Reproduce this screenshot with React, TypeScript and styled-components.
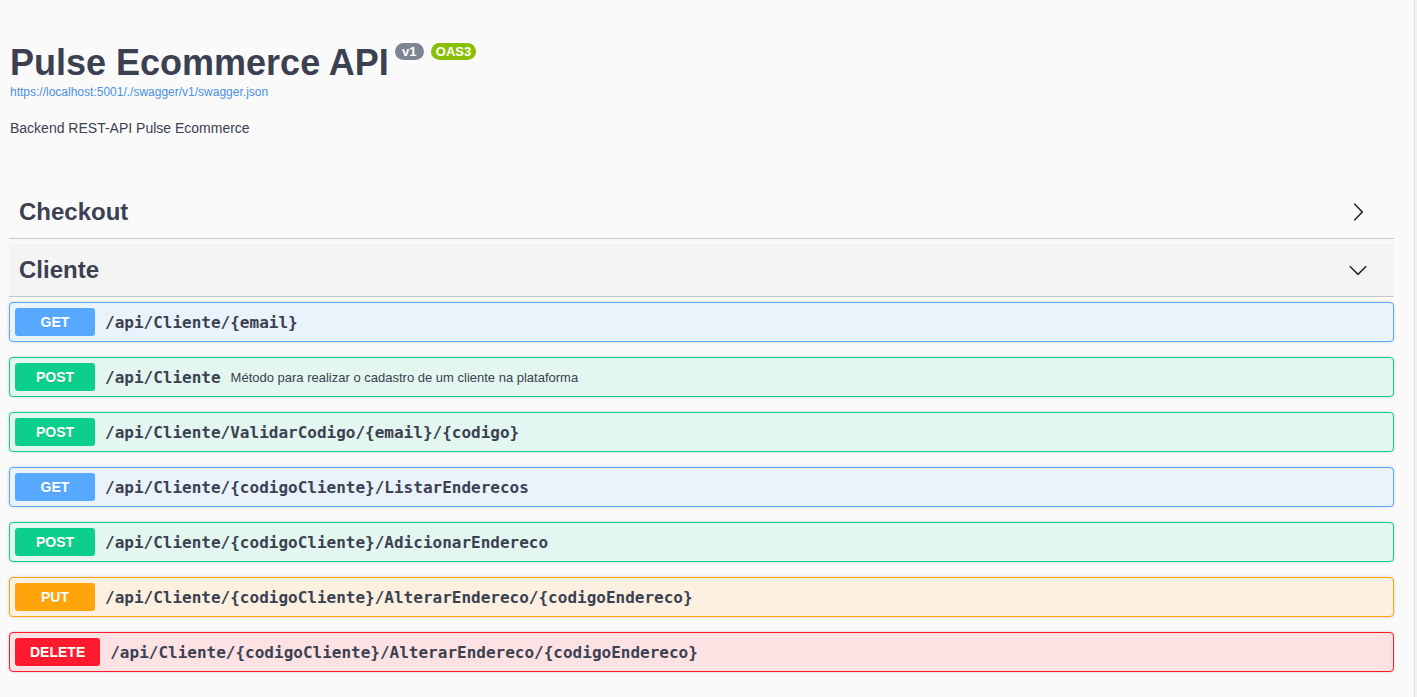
import React from 'react';
import styled, { createGlobalStyle } from 'styled-components';

const GlobalStyle = createGlobalStyle`
    html {
        background: linear-gradient(to left, #f2f2f2 0 2px, #e2e2e2 2px 3px, #fafafa 3px);
    }
    body {
        margin: 0;
        background: transparent;
        font-family: 'Liberation Sans', Arial, sans-serif;
        color: #3b4151;
    }
`;

const methodColors = {
    GET: { main: '#56a9ff', bg: '#eaf2fc' },
    POST: { main: '#0ccf8b', bg: '#e3f6ef' },
    PUT: { main: '#ffa40a', bg: '#fcf0e0' },
    DELETE: { main: '#fe1b2d', bg: '#fde2e4' },
};

type Method = keyof typeof methodColors;

const Wrapper = styled.div`
    padding: 0 23px 40px 9px;
`;

const Info = styled.div`
    padding: 42px 0 0 1px;
`;

const TitleRow = styled.div`
    display: flex;
    align-items: flex-start;
    gap: 6px;
`;

const Title = styled.h2`
    margin: 0;
    font-size: 36px;
    line-height: 41px;
    font-weight: 700;
    color: #3b4151;
`;

const Badges = styled.div`
    display: flex;
    gap: 7px;
    margin-top: 1px;
`;

const Badge = styled.span<{ $color: string }>`
    display: inline-block;
    box-sizing: border-box;
    min-width: 29px;
    height: 17px;
    padding: 0 5px;
    border-radius: 57px;
    background: ${(p) => p.$color};
    color: #fff;
    font-size: 13px;
    font-weight: 700;
    line-height: 17px;
    text-align: center;
`;

const Link = styled.a`
    display: block;
    margin-top: 2px;
    font-size: 12px;
    line-height: 14px;
    color: #4990e2;
    text-decoration: none;
`;

const Description = styled.p`
    margin: 19px 0 0;
    font-size: 14px;
    line-height: 20px;
    color: #3b4151;
`;

const Sections = styled.div`
    margin-top: 48px;
`;

const TagHeader = styled.div<{ $open?: boolean }>`
    display: flex;
    align-items: center;
    height: 32px;
    padding: 10px 26px 10px 10px;
    margin-bottom: 5px;
    border-bottom: 1px solid #c4c5ca;
    background: ${(p) => (p.$open ? '#f4f4f4' : 'transparent')};
    cursor: pointer;
`;

const TagName = styled.h3`
    flex: 1;
    margin: 0;
    font-size: 24px;
    font-weight: 700;
    color: #3b4151;
`;

const Arrow = styled.svg`
    width: 20px;
    height: 20px;
    fill: #222;
`;

const OpBlock = styled.div<{ $method: Method }>`
    display: flex;
    align-items: center;
    padding: 5px;
    margin-bottom: 15px;
    border: 1px solid ${(p) => methodColors[p.$method].main};
    border-radius: 4px;
    background: ${(p) => methodColors[p.$method].bg};
    box-shadow: 0 0 3px rgba(0, 0, 0, 0.19);
    cursor: pointer;
`;

const MethodLabel = styled.span<{ $method: Method }>`
    box-sizing: border-box;
    min-width: 80px;
    padding: 6px 15px;
    border-radius: 3px;
    background: ${(p) => methodColors[p.$method].main};
    color: #fff;
    font-size: 14px;
    font-weight: 700;
    line-height: 16px;
    text-align: center;
    text-shadow: 0 1px 0 rgba(0, 0, 0, 0.1);
`;

const Path = styled.span`
    padding: 0 10px;
    font-family: 'DejaVu Sans Mono', monospace;
    font-size: 16px;
    font-weight: 600;
    color: #3b4151;
`;

const Summary = styled.span`
    font-size: 13px;
    color: #3b4151;
`;

const operations: { method: Method; path: string; summary?: string }[] = [
    { method: 'GET', path: '/api/Cliente/{email}' },
    {
        method: 'POST',
        path: '/api/Cliente',
        summary: 'Método para realizar o cadastro de um cliente na plataforma',
    },
    { method: 'POST', path: '/api/Cliente/ValidarCodigo/{email}/{codigo}' },
    { method: 'GET', path: '/api/Cliente/{codigoCliente}/ListarEnderecos' },
    { method: 'POST', path: '/api/Cliente/{codigoCliente}/AdicionarEndereco' },
    {
        method: 'PUT',
        path: '/api/Cliente/{codigoCliente}/AlterarEndereco/{codigoEndereco}',
    },
    {
        method: 'DELETE',
        path: '/api/Cliente/{codigoCliente}/AlterarEndereco/{codigoEndereco}',
    },
];

function ArrowRight() {
    return (
        <Arrow viewBox='0 0 20 20'>
            <path d='M13.25 10L6.109 2.58a.697.697 0 0 1 0-.979.68.68 0 0 1 .969 0l7.83 7.908a.697.697 0 0 1 0 .979l-7.83 7.908a.68.68 0 0 1-.969 0 .697.697 0 0 1 0-.979L13.25 10z' />
        </Arrow>
    );
}

function ArrowDown() {
    return (
        <Arrow viewBox='0 0 20 20'>
            <path d='M17.418 6.109c.272-.268.709-.268.979 0s.271.701 0 .969l-7.908 7.83c-.27.268-.707.268-.979 0l-7.908-7.83c-.27-.268-.27-.701 0-.969.271-.268.709-.268.979 0L10 13.25l7.418-7.141z' />
        </Arrow>
    );
}

export default function App() {
    return (
        <>
            <GlobalStyle />
            <Wrapper>
                <Info>
                    <TitleRow>
                        <Title>Pulse Ecommerce API</Title>
                        <Badges>
                            <Badge $color='#7d8492'>v1</Badge>
                            <Badge $color='#89bf04'>OAS3</Badge>
                        </Badges>
                    </TitleRow>
                    <Link href='#'>https://localhost:5001/./swagger/v1/swagger.json</Link>
                    <Description>Backend REST-API Pulse Ecommerce</Description>
                </Info>
                <Sections>
                    <TagHeader>
                        <TagName>Checkout</TagName>
                        <ArrowRight />
                    </TagHeader>
                    <TagHeader $open>
                        <TagName>Cliente</TagName>
                        <ArrowDown />
                    </TagHeader>
                    {operations.map((op, i) => (
                        <OpBlock key={i} $method={op.method}>
                            <MethodLabel $method={op.method}>{op.method}</MethodLabel>
                            <Path>{op.path}</Path>
                            {op.summary && <Summary>{op.summary}</Summary>}
                        </OpBlock>
                    ))}
                </Sections>
            </Wrapper>
        </>
    );
}
